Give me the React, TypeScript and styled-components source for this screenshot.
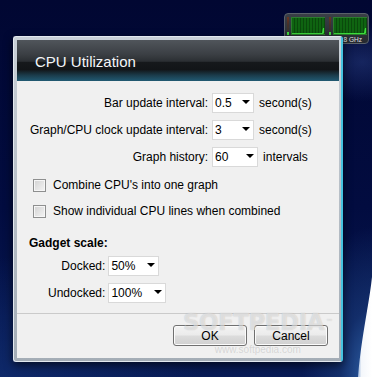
import React from "react";
import styled, { createGlobalStyle } from "styled-components";

const Global = createGlobalStyle`
  html, body {
    margin: 0;
    padding: 0;
    background: #020b3b;
  }
  body {
    font-family: "Liberation Sans", Arial, sans-serif;
    font-size: 12px;
    color: #000;
  }
`;

const Desktop = styled.div`
  position: relative;
  width: 372px;
  height: 377px;
  overflow: hidden;
  background:
    radial-gradient(ellipse 60px 40px at 362px 62px, rgba(60, 90, 170, 0.35) 0%, rgba(2, 11, 59, 0) 100%),
    radial-gradient(ellipse 70px 150px at 372px 377px, #2f62a8 0%, rgba(24, 56, 118, 0.7) 45%, rgba(2, 11, 59, 0) 100%),
    radial-gradient(ellipse 200px 120px at 0px 377px, rgba(16, 44, 110, 0.8) 0%, rgba(2, 11, 59, 0) 100%),
    linear-gradient(180deg, #010732 0%, #020c40 55%, #081b55 100%);
`;

const Swoosh = styled.svg`
  position: absolute;
  right: 0;
  bottom: 0;
`;

/* gadget on the desktop */
const Gadget = styled.div`
  position: absolute;
  left: 284px;
  top: 13px;
  width: 85px;
  height: 31px;
  box-sizing: border-box;
  border: 1px solid #596069;
  border-radius: 4px;
  background: linear-gradient(180deg, #3a3f47 0%, #25292f 100%);
  display: flex;
  gap: 4px;
  padding: 3px 0 0 2px;
`;

const Core = styled.div`
  display: flex;
  flex-direction: column;
`;

const CoreTop = styled.div`
  display: flex;
  gap: 2px;
`;

const Meter = styled.div`
  width: 2px;
  height: 18px;
  display: flex;
  flex-direction: column;
  justify-content: flex-end;
  background: linear-gradient(180deg, #6a3422 0%, #43302a 45%, #2e3530 100%);
  &::after {
    content: "";
    height: 3px;
    background: #3fdc3f;
  }
`;

const Caption = styled.div`
  margin: 1px 0 0 4px;
  width: 34px;
  text-align: center;
  font-size: 6.5px;
  line-height: 7px;
  color: #e0e3e6;
  white-space: nowrap;
`;

/* dialog window */
const Window = styled.div`
  position: absolute;
  left: 13px;
  top: 36px;
  width: 330px;
  height: 326px;
  box-sizing: border-box;
  display: flex;
  flex-direction: column;
  border: 1px solid #e3e9ef;
  border-right: 2px solid #46c3df;
  border-radius: 3px;
  padding: 3px 2px 3px 3px;
  background: linear-gradient(180deg, #c9d0d7 0%, #a4adb6 100%);
  box-shadow: 0 3px 10px rgba(0, 0, 0, 0.65);
`;

const TitleBar = styled.div`
  flex: none;
  height: 41px;
  box-sizing: border-box;
  display: flex;
  align-items: center;
  padding: 2px 0 0 18px;
  color: #f4f6f8;
  font-size: 15px;
  background: linear-gradient(
    180deg,
    #50555b 0%,
    #3b3f44 35%,
    #2b2f33 52%,
    #16191c 54%,
    #121518 72%,
    #1b3c4b 86%,
    #215a73 100%
  );
`;

const Body = styled.div`
  flex: 1;
  display: flex;
  flex-direction: column;
  background: #f0f0f0;
`;

const Main = styled.div`
  flex: 1;
  padding: 12px 0 0 12px;
`;

const SettingsGrid = styled.div`
  display: grid;
  grid-template-columns: auto auto;
  justify-content: start;
  column-gap: 4px;
  row-gap: 7px;
  margin-left: 1px;
`;

const Label = styled.div`
  justify-self: end;
  align-self: center;
  white-space: nowrap;
`;

const Field = styled.div`
  display: flex;
  align-items: center;
  height: 20px;
`;

const Select = styled.div<{ $w: number }>`
  width: ${(p) => p.$w}px;
  height: 20px;
  box-sizing: border-box;
  border: 1px solid #d9d9d9;
  background: #fff;
  display: flex;
  align-items: center;
  justify-content: space-between;
  padding: 0 3px 1px 2px;
  &::after {
    content: "";
    border-left: 4px solid transparent;
    border-right: 4px solid transparent;
    border-top: 4px solid #000;
    margin-top: -1px;
  }
`;

const Unit = styled.span`
  margin-left: 5px;
`;

const Checks = styled.div`
  margin-top: 8px;
  padding-left: 4px;
  display: flex;
  flex-direction: column;
  gap: 6px;
`;

const CheckRow = styled.div`
  display: flex;
  align-items: center;
  gap: 7px;
  height: 20px;
`;

const Box = styled.div`
  width: 13px;
  height: 13px;
  box-sizing: border-box;
  border: 1px solid #8e8f8f;
  background: linear-gradient(135deg, #d2d2d2 0%, #f4f4f4 100%);
  box-shadow: inset 0 0 0 1px #f6f6f6;
`;

const Heading = styled.div`
  margin-top: 15px;
  font-weight: bold;
  line-height: 14px;
`;

const ScaleGrid = styled(SettingsGrid)`
  margin: 6px 0 0 19px;
  column-gap: 3px;
`;

const Footer = styled.div`
  flex: none;
  height: 45px;
  box-sizing: border-box;
  border-top: 1px solid #cacaca;
  display: flex;
  justify-content: flex-end;
  align-items: center;
  gap: 7px;
  padding: 0 11px 1px 0;
`;

const Button = styled.button`
  width: 74px;
  height: 21px;
  border: 1px solid #707070;
  border-radius: 3px;
  font-family: inherit;
  font-size: 12px;
  color: #000;
  padding: 0;
  background: linear-gradient(180deg, #f3f3f3 0%, #ebebeb 48%, #dcdcdc 52%, #d0d0d0 100%);
  box-shadow: inset 0 0 0 1px #fbfbfb;
`;

const Watermark = styled.div`
  position: absolute;
  left: 183px;
  top: 309px;
  pointer-events: none;
  display: flex;
  flex-direction: column;
  align-items: center;
  color: rgba(255, 255, 255, 0.5);
`;

const Mark = styled.div`
  font-family: "DejaVu Sans", sans-serif;
  font-weight: bold;
  font-size: 23px;
  letter-spacing: -0.5px;
  line-height: 26px;
  text-shadow: 0 0 1px rgba(110, 110, 110, 0.4);
  sup {
    font-size: 7px;
    vertical-align: top;
    margin-left: 2px;
  }
`;

const Url = styled.div`
  margin-top: 9px;
  font-size: 10px;
  color: rgba(150, 150, 150, 0.3);
`;

function Graph() {
  const lines = [];
  for (let x = 3; x < 34; x += 3) lines.push(x);
  return (
    <svg width="34" height="18" viewBox="0 0 34 18">
      <rect x="0.5" y="0.5" width="33" height="17" fill="#0f6411" stroke="#2b7c2e" />
      {lines.map((x) => (
        <line key={x} x1={x + 0.5} y1="1" x2={x + 0.5} y2="17" stroke="#0a4a0c" strokeWidth="1" />
      ))}
      <polyline points="1,16.5 31.5,16.5 32.5,11 32.5,16.5" fill="none" stroke="#3cdc3c" strokeWidth="1.2" />
    </svg>
  );
}

function CpuCore() {
  return (
    <Core>
      <CoreTop>
        <Meter />
        <Graph />
      </CoreTop>
      <Caption>1.8 GHz</Caption>
    </Core>
  );
}

export default function App() {
  return (
    <Desktop>
      <Global />
      <Swoosh width="30" height="100" viewBox="0 0 30 100">
        <defs>
          <linearGradient id="sw" x1="0" y1="0" x2="1" y2="0">
            <stop offset="0" stopColor="#9fb8dc" />
            <stop offset="0.25" stopColor="#f4f7fb" />
            <stop offset="1" stopColor="#ffffff" />
          </linearGradient>
        </defs>
        <path d="M30 0 C29 10 27 22 25 34 C22 52 18 75 16 100 L30 100 Z" fill="url(#sw)" />
      </Swoosh>

      <Gadget>
        <CpuCore />
        <CpuCore />
      </Gadget>

      <Window>
        <TitleBar>CPU Utilization</TitleBar>
        <Body>
          <Main>
            <SettingsGrid>
              <Label>Bar update interval:</Label>
              <Field>
                <Select $w={42}>0.5</Select>
                <Unit>second(s)</Unit>
              </Field>
              <Label>Graph/CPU clock update interval:</Label>
              <Field>
                <Select $w={42}>3</Select>
                <Unit>second(s)</Unit>
              </Field>
              <Label>Graph history:</Label>
              <Field>
                <Select $w={46}>60</Select>
                <Unit>intervals</Unit>
              </Field>
            </SettingsGrid>

            <Checks>
              <CheckRow>
                <Box />
                <span>Combine CPU's into one graph</span>
              </CheckRow>
              <CheckRow>
                <Box />
                <span>Show individual CPU lines when combined</span>
              </CheckRow>
            </Checks>

            <Heading>Gadget scale:</Heading>
            <ScaleGrid>
              <Label>Docked:</Label>
              <Field>
                <Select $w={51}>50%</Select>
              </Field>
              <Label>Undocked:</Label>
              <Field>
                <Select $w={58}>100%</Select>
              </Field>
            </ScaleGrid>
          </Main>
          <Footer>
            <Button>OK</Button>
            <Button>Cancel</Button>
          </Footer>
        </Body>
      </Window>

      <Watermark>
        <Mark>
          SOFTPEDIA<sup>™</sup>
        </Mark>
        <Url>www.softpedia.com</Url>
      </Watermark>
    </Desktop>
  );
}
